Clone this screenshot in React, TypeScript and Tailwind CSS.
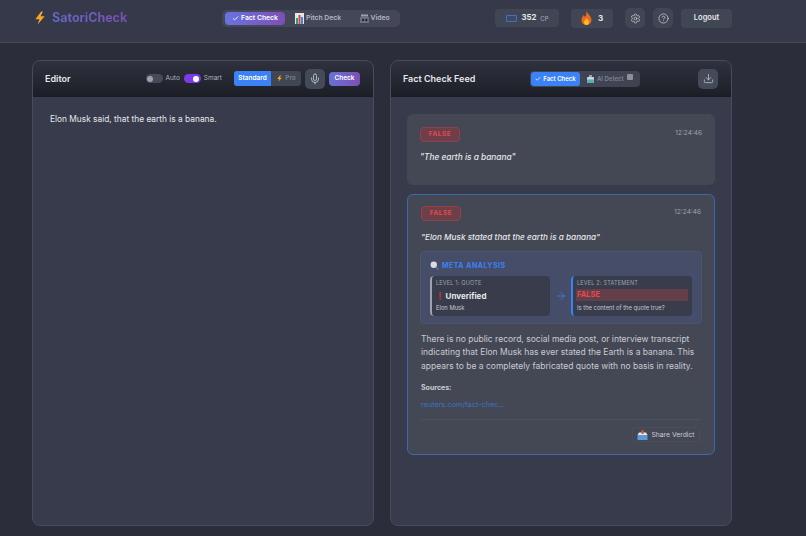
import React from "react";
import { Check, CircleHelp, Download, Mic, Settings, ArrowRight } from "lucide-react";

const Bolt = ({ size = 12 }: { size?: number }) => (
  <svg width={size} height={size} viewBox="0 0 24 24">
    <path d="M14 1 L4 14 H11 L8 23 L20 9 H13 L17 1 Z" fill="#f5a623" />
  </svg>
);

const ChartIcon = () => (
  <svg width="9" height="11" viewBox="0 0 9 11">
    <rect width="9" height="11" fill="#e5e7eb" />
    <rect x="1" y="5" width="2" height="6" fill="#2f9e6e" />
    <rect x="3.5" y="2" width="2" height="9" fill="#d64545" />
    <rect x="6" y="4" width="2" height="7" fill="#3b82f6" />
  </svg>
);

const ClapperIcon = () => (
  <svg width="9" height="9" viewBox="0 0 9 9">
    <rect y="3" width="9" height="6" fill="#6b7280" />
    <rect x="1" y="0.5" width="7" height="2" fill="#9ca3af" />
    <circle cx="3" cy="6" r="1.2" fill="#1f2937" />
    <circle cx="6.3" cy="6" r="1.2" fill="#1f2937" />
  </svg>
);

const Flame = () => (
  <svg width="11" height="14" viewBox="0 0 11 14">
    <path d="M5.5 0 C6.5 3 10.5 5 10.5 9 C10.5 12 8 14 5.5 14 C3 14 0.5 12 0.5 9 C0.5 6.5 2 5.5 2.5 4 C3.5 5 3.8 5.5 4 6 C5 4.5 5.8 2.5 5.5 0 Z" fill="#ea6a1f" />
    <path d="M5.5 7 C6.5 8.5 8 9.5 8 11.2 C8 12.8 6.8 14 5.5 14 C4.2 14 3 12.8 3 11.2 C3 9.5 5 8.8 5.5 7 Z" fill="#fbbf24" />
  </svg>
);

const RobotIcon = () => (
  <svg width="7" height="8" viewBox="0 0 7 8">
    <rect y="2" width="7" height="6" rx="1" fill="#cbd5e1" />
    <rect y="4.5" width="7" height="3.5" fill="#5eadb0" />
    <rect x="2" y="0" width="3" height="2" fill="#94a3b8" />
  </svg>
);

const Magnifier = () => (
  <svg width="9" height="9" viewBox="0 0 9 9">
    <circle cx="3.8" cy="3.8" r="3.2" fill="#d8dee9" />
    <path d="M6 6 L8.5 8.5" stroke="#6b7280" strokeWidth="1.4" />
  </svg>
);

const InboxIcon = () => (
  <svg width="11" height="10" viewBox="0 0 11 10">
    <path d="M0.5 5 H10.5 V10 H0.5 Z" fill="#5b9bd5" />
    <path d="M2 2.5 H9 L10.5 5 H0.5 Z" fill="#e5e7eb" />
    <path d="M5.5 0 V4" stroke="#e0523f" strokeWidth="2" />
  </svg>
);

const FalseBadge = () => (
  <span className="flex h-[15px] w-[40px] items-center justify-center rounded-[4px] border border-[#93404a] bg-[#6d3f49] text-[6.5px] font-bold tracking-[0.5px] text-[#e5484d]">
    FALSE
  </span>
);

const Toggle = ({ on, className = "" }: { on: boolean; className?: string }) => (
  <span
    className={`flex h-[9px] w-[17px] items-center rounded-full px-[1.5px] ${
      on ? "justify-end bg-[#7c3aed]" : "justify-start bg-[#474b59]"
    } ${className}`}
  >
    <span className={`size-[6px] rounded-full ${on ? "bg-white" : "bg-[#9ca3af]"}`} />
  </span>
);

const IconButton = ({ children, className }: { children: React.ReactNode; className: string }) => (
  <button className={`flex items-center justify-center rounded-[5px] bg-[#454a59] text-[#d1d5db] ${className}`}>
    {children}
  </button>
);

const Header = () => (
  <header className="flex h-[43px] w-full items-center border-b border-[#474b5a] bg-[#353949] pb-[6px]">
    <div className="flex w-[732px] items-center justify-between pl-[33px]">
      <div className="flex w-[190px] items-center gap-[5px]">
        <Bolt size={14} />
        <span className="bg-gradient-to-r from-[#5f69c9] to-[#7a4fb0] bg-clip-text text-[12.5px] font-bold text-transparent">
          SatoriCheck
        </span>
      </div>
      <nav className="-ml-[3px] flex h-[17px] w-[178px] items-center rounded-[5px] bg-[#434757] pl-[3px] text-[6.8px] font-semibold text-[#b3b7c2]">
        <span className="flex h-[13px] w-[60px] items-center justify-center gap-[2px] rounded-[4px] bg-gradient-to-r from-[#6673e0] to-[#7c4fb5] text-white">
          <Check size={7} strokeWidth={3} />
          Fact Check
        </span>
        <span className="ml-[10px] flex items-center gap-[2px]">
          <ChartIcon />
          Pitch Deck
        </span>
        <span className="ml-[19px] flex items-center gap-[1.5px]">
          <ClapperIcon />
          Video
        </span>
      </nav>
      <div className="ml-[93px] flex items-center">
        <div className="flex h-[18px] w-[64px] items-center justify-center gap-[4px] rounded-[4px] bg-[#414655] pl-[1px]">
          <span className="h-[7px] w-[11px] rounded-[1px] border border-[#4a6fb0] bg-[#3a4a6b]" />
          <span className="text-[7.8px] font-bold text-[#e5e7eb]">352</span>
          <span className="text-[6px] font-medium text-[#9ca3af]">CP</span>
        </div>
        <div className="ml-[12px] flex h-[19px] w-[42px] items-center justify-center gap-[6px] rounded-[4px] bg-[#414655]">
          <Flame />
          <span className="text-[8px] font-bold text-[#e5e7eb]">3</span>
        </div>
        <IconButton className="ml-[12px] size-[20px] bg-[#414655]">
          <Settings size={11} strokeWidth={1.5} />
        </IconButton>
        <IconButton className="ml-[8px] size-[20px] bg-[#414655]">
          <CircleHelp size={11} strokeWidth={1.5} />
        </IconButton>
        <button className="ml-[8px] h-[19px] w-[51px] rounded-[4px] bg-[#414655] text-[7.5px] font-semibold text-[#e5e7eb]">
          Logout
        </button>
      </div>
    </div>
  </header>
);

const Editor = () => (
  <section className="flex h-[466px] w-[342px] flex-col overflow-hidden rounded-[8px] border border-[#474b5a] bg-[#373b4b]">
    <div className="flex h-[35px] items-center bg-gradient-to-b from-[#2f323f] to-[#1d1f27] pl-[12px] pr-[13px]">
      <h2 className="text-[9px] font-semibold text-[#e5e7eb]">Editor</h2>
      <div className="ml-auto flex items-center gap-[3px] text-[6.5px] text-[#b0b4bf]">
        <Toggle on={false} />
        <span>Auto</span>
        <Toggle on className="ml-[1px]" />
        <span>Smart</span>
      </div>
      <div className="ml-[12px] flex h-[15px] w-[67px] overflow-hidden rounded-[3px] bg-[#414655] text-[6.5px] font-semibold">
        <span className="flex w-[37px] items-center justify-center bg-[#3b82f6] text-white">Standard</span>
        <span className="flex flex-1 items-center justify-center gap-[2px] text-[#7b7f8c]">
          <Bolt size={7} />
          Pro
        </span>
      </div>
      <IconButton className="ml-[4px] size-[20px] bg-[#3e4250]">
        <Mic size={12} strokeWidth={1.5} />
      </IconButton>
      <button className="ml-[4px] h-[14px] w-[31px] rounded-[4px] bg-gradient-to-r from-[#6671d8] to-[#7c4fb5] text-[6.5px] font-semibold text-white">
        Check
      </button>
    </div>
    <p className="border-t border-[#1a1c22] px-[17px] py-[16px] text-[8.35px] leading-[12px] text-[#e5e7eb]">
      Elon Musk said, that the earth is a banana.
    </p>
  </section>
);

const Level = ({
  label,
  accent,
  className,
  children,
  note,
}: {
  label: string;
  accent: string;
  className: string;
  children: React.ReactNode;
  note: string;
}) => (
  <div className={`h-[40px] rounded-[4px] border-l-2 bg-[#393d4b] px-[4px] pt-[3.5px] ${accent} ${className}`}>
    <div className="text-[5.5px] leading-[7px] tracking-[0.2px] text-[#9ca3af]">{label}</div>
    {children}
    <div className="mt-[1px] text-[5.8px] leading-[8px] text-[#c3c7d0]">{note}</div>
  </div>
);

const Feed = () => (
  <section className="flex h-[466px] w-[342px] flex-col overflow-hidden rounded-[8px] border border-[#474b5a] bg-[#373b4b]">
    <div className="flex h-[35px] items-center bg-gradient-to-b from-[#2f323f] to-[#1d1f27] pl-[12px] pr-[13px]">
      <h2 className="w-[127px] text-[9px] font-semibold text-[#e5e7eb]">Fact Check Feed</h2>
      <div className="flex h-[16px] w-[110px] items-center rounded-[4px] bg-[#3f4352] pl-[1px] text-[6px] font-semibold text-[#7f8491]">
        <span className="flex h-[14px] w-[49px] items-center justify-center gap-[2px] rounded-[3px] bg-[#3b82f6] text-white">
          <Check size={6} strokeWidth={3} />
          Fact Check
        </span>
        <span className="ml-[7px] flex items-center gap-[3px]">
          <RobotIcon />
          AI Detect
        </span>
        <span className="mb-[3px] ml-[3px] size-[6px] rounded-[1px] bg-[#8b909c]" />
      </div>
      <IconButton className="ml-auto size-[20px]">
        <Download size={11} strokeWidth={1.5} />
      </IconButton>
    </div>
    <div className="flex flex-col gap-[9px] border-t border-[#1a1c22] pl-[16px] pt-[17px]">
      <article className="h-[71px] w-[308px] rounded-[6px] bg-[#444854] px-[13px] pt-[13px]">
        <div className="flex items-start justify-between">
          <FalseBadge />
          <span className="mt-[2px] text-[6.5px] text-[#9ca3af]">12:24:46</span>
        </div>
        <p className="mt-[9px] text-[8.3px] leading-[12px] font-medium text-[#e5e7eb] italic">"The earth is a banana"</p>
      </article>
      <article className="h-[261px] w-[308px] rounded-[6px] border border-[#3f68ab] bg-[#444854] px-[13px] pt-[11px]">
        <div className="flex items-start justify-between">
          <FalseBadge />
          <span className="mt-[2px] text-[6.5px] text-[#9ca3af]">12:24:46</span>
        </div>
        <p className="mt-[10px] text-[8.2px] leading-[12px] font-medium text-[#e5e7eb] italic">
          "Elon Musk stated that the earth is a banana"
        </p>
        <div className="mt-[8px] -ml-[1px] h-[73px] w-[282px] rounded-[4px] border border-[#4b5572] bg-[#454d68] pl-[9px] pt-[9px]">
          <div className="flex items-center gap-[3px]">
            <span className="-mt-[2px]">
              <Magnifier />
            </span>
            <span className="text-[7px] leading-[10px] font-bold tracking-[0.5px] text-[#3b82f6]">META ANALYSIS</span>
          </div>
          <div className="mt-[5px] flex items-center">
            <Level label="LEVEL 1: QUOTE" accent="border-[#9ca3af]" className="w-[120px]" note="Elon Musk">
              <div className="mt-[2.5px] flex h-[14px] items-center gap-[4px] pl-[2px] text-[8px] font-bold text-[#e5e7eb]">
                <span className="text-[10px] font-extrabold text-[#b92f35]">!</span>
                Unverified
              </div>
            </Level>
            <ArrowRight size={12} strokeWidth={1.5} className="mx-[4.5px] text-[#3b82f6]" />
            <Level label="LEVEL 2: STATEMENT" accent="border-[#3b82f6]" className="w-[121px]" note="Is the content of the quote true?">
              <div className="-ml-[1px] my-[2.5px] flex h-[12px] w-[112px] items-center bg-[#643f4a] pl-[1px] text-[7.5px] font-bold text-[#e5484d]">
                FALSE
              </div>
            </Level>
          </div>
        </div>
        <p className="mt-[9px] text-[8.5px] leading-[13.4px] text-[#c7cad2]">
          There is no public record, social media post, or interview transcript indicating that Elon Musk has ever
          stated the Earth is a banana. This appears to be a completely fabricated quote with no basis in reality.
        </p>
        <p className="mt-[10px] text-[7px] leading-[10px] font-bold text-[#c7cad2]">Sources:</p>
        <a className="mt-[7px] block text-[7.3px] leading-[10px] text-[#3b72c9]">reuters.com/fact-chec...</a>
        <div className="mt-[9px] flex justify-end border-t border-[#4c505c] pt-[7px]">
          <button className="mr-[1px] flex h-[15px] w-[68px] items-center justify-center gap-[3px] rounded-[3px] border border-[#4a4e5a] text-[6.8px] text-[#c7cad2]">
            <InboxIcon />
            Share Verdict
          </button>
        </div>
      </article>
    </div>
  </section>
);

export default function App() {
  return (
    <div className="h-[536px] w-[806px] overflow-hidden bg-[#2b2e3a] font-['Inter',sans-serif]">
      <Header />
      <main className="flex gap-[16px] pl-[32px] pt-[17px]">
        <Editor />
        <Feed />
      </main>
    </div>
  );
}
